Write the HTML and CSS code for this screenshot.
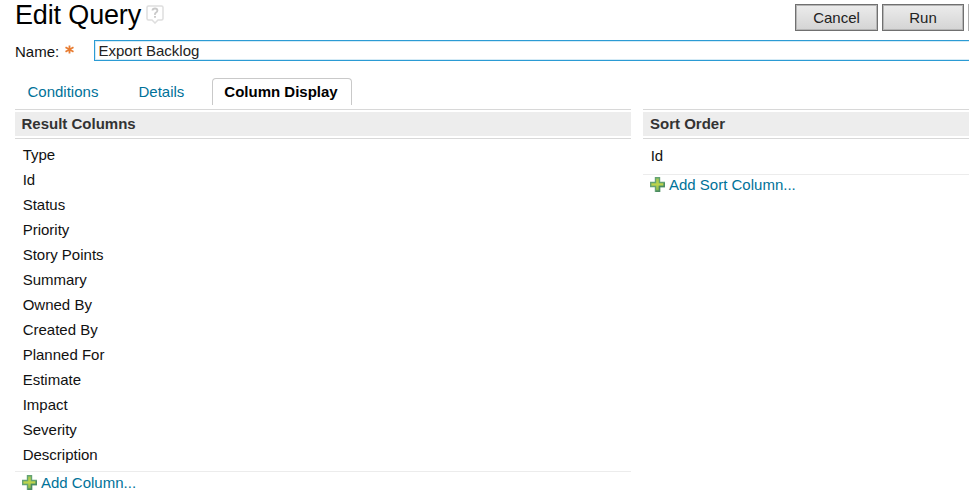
FILE: index.html
```html
<!DOCTYPE html>
<html lang="en">
<head>
<meta charset="utf-8">
<title>Edit Query</title>
<link rel="stylesheet" href="styles.css">
</head>
<body>
<svg width="0" height="0" class="defs" aria-hidden="true">
  <defs>
    <linearGradient id="plus-fill" x1="0" y1="0" x2="0" y2="1">
      <stop offset="0" stop-color="#9fc653"/>
      <stop offset=".5" stop-color="#bdd44c"/>
      <stop offset="1" stop-color="#7fb44c"/>
    </linearGradient>
    <symbol id="plus" viewBox="0 0 15 15">
      <path d="M5.500 .7h4v4.800h4.800v4H9.500v4.800h-4V9.500H.7v-4h4.800z" fill="url(#plus-fill)" stroke="#64a374" stroke-width="1.400"/>
      <path d="M14.300 6v3.500H9.500v4.800H6" fill="none" stroke="#4b8b62" stroke-width="1.400"/>
    </symbol>
  </defs>
</svg>
<header class="header">
  <h1 class="title">Edit Query</h1>
  <svg class="help" width="18" height="19" viewBox="0 0 18 19">
    <path d="M2.500 1h13q1.500 0 1.500 1.500v11q0 1.500-1.500 1.500H12l-3 3-3-3H2.500Q1 15 1 13.500v-11Q1 1 2.500 1z" fill="#fff" stroke="#dedede" stroke-width="1.500"/>
    <path d="M6.500 5.500Q6.700 3.500 9 3.500t2.400 2q0 1.200-1.300 2T9 9.800M9 11v1.800" fill="none" stroke="#c9c9c9" stroke-width="1.900"/>
  </svg>
  <div class="actions">
    <button class="button">Cancel</button>
    <button class="button run">Run</button>
    <span class="button-edge"></span>
  </div>
</header>
<div class="name-row">
  <label class="label" for="name">Name:</label>
  <svg class="required" width="9" height="9" viewBox="0 0 9 9"><path d="M4.500 .5v8M.5 2.300l8 4.400M8.500 2.300l-8 4.400" stroke="#e87d32" stroke-width="1.800"/></svg>
  <input class="name-input" id="name" value="Export Backlog">
</div>
<nav class="tabs">
  <a class="tab conditions">Conditions</a>
  <a class="tab details">Details</a>
  <a class="tab active">Column Display</a>
</nav>
<main class="columns">
  <section>
    <h2 class="heading"><span>Result Columns</span></h2>
    <ul class="list">
      <li>Type</li><li>Id</li><li>Status</li><li>Priority</li><li>Story Points</li><li>Summary</li><li>Owned By</li><li>Created By</li><li>Planned For</li><li>Estimate</li><li>Impact</li><li>Severity</li><li>Description</li>
    </ul>
    <a class="add"><svg width="15" height="15"><use href="#plus"/></svg><span>Add Column...</span></a>
  </section>
  <section class="sort">
    <h2 class="heading"><span>Sort Order</span></h2>
    <ul class="list"><li>Id</li></ul>
    <a class="add"><svg width="15" height="15"><use href="#plus"/></svg><span>Add Sort Column...</span></a>
  </section>
</main>
</body>
</html>
```
FILE: styles.css
```css
* { box-sizing: border-box; }
body {
  margin: 0;
  height: 500px;
  overflow: hidden;
  background: #fff;
  color: #111;
  font: 15px/25px "Liberation Sans", Arial, sans-serif;
}
.defs { display: block; }
.header {
  display: flex;
  align-items: flex-start;
  height: 40px;
  padding-left: 15px;
}
.title {
  margin: 0;
  width: 131px;
  color: #000;
  font-size: 27px;
  font-weight: 400;
  letter-spacing: -.15px;
  line-height: 30px;
  white-space: nowrap;
}
.help { margin-top: 5px; }
.actions {
  display: flex;
  gap: 4px;
  margin: 4px 0 0 auto;
}
.button {
  width: 83px;
  height: 27px;
  padding: 0;
  border: 1px solid #707070;
  box-shadow: inset 0 0 0 1px #b5b5b5;
  background: linear-gradient(#ececec, #d4d4d4);
  color: #222;
  font: 15px "Liberation Sans", Arial, sans-serif;
}
.run { width: 82px; }
.button-edge { width: 1px; height: 27px; background: #adadad; }
.name-row {
  display: flex;
  height: 21px;
  padding-left: 15px;
}
.label { width: 50px; line-height: 24px; }
.required { margin-top: 5px; }
.name-input {
  flex: 1;
  min-width: 0;
  margin-left: 20px;
  padding: 0 3.500px;
  border: 1px solid #2b9bd4;
  border-right: 0;
  box-shadow: inset 0 1px #d5ebf6, inset 1px 0 #d5ebf6, inset 0 -1px #d5ebf6;
  color: #222;
  font: 15px "Liberation Sans", Arial, sans-serif;
}
.tabs {
  display: flex;
  height: 27px;
  margin: 17px 0 4px 15px;
}
.tab { color: #007299; line-height: 28px; }
.conditions { width: 111px; padding-left: 12.500px; }
.details { width: 86px; padding-left: 12.500px; }
.active {
  width: 140px;
  padding-right: 2px;
  border: 1px solid #c9c9c9;
  border-bottom: 0;
  border-radius: 4px 4px 0 0;
  color: #000;
  font-weight: 700;
  line-height: 26px;
  text-align: center;
}
.columns {
  display: grid;
  grid-template-columns: 616px 1fr;
  gap: 12px;
  padding-left: 15px;
}
.heading {
  margin: 0;
  height: 30px;
  padding: 2px 0;
  border: solid #d8d8d8;
  border-width: 1px 0;
  color: #333;
  font-size: 15px;
  line-height: 24px;
}
.heading span { display: block; padding-left: 6.500px; background: #ededed; }
.list {
  margin: 0;
  padding: 3px 0 4px 7.700px;
  border-bottom: 1px solid #ececec;
  list-style: none;
}
.sort .heading span { padding-left: 7px; }
.sort .list { padding-top: 4px; padding-bottom: 6px; }
.add {
  display: flex;
  gap: 4px;
  padding: 3px 0 0 7px;
  color: #007299;
  line-height: 15px;
}
.sort .add { padding-top: 2px; }
```
